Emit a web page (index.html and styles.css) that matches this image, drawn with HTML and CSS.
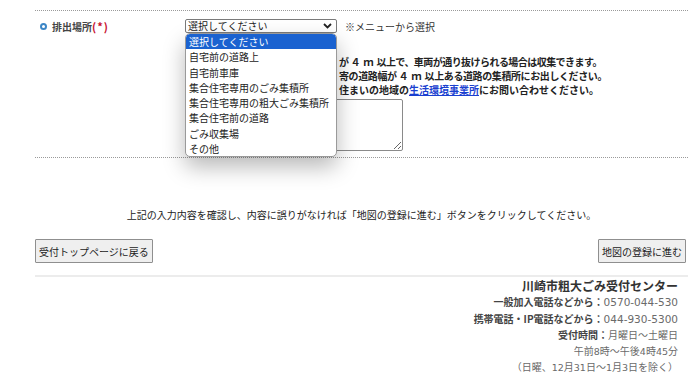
FILE: index.html
```html
<!DOCTYPE html>
<html lang="ja">
<head>
<meta charset="utf-8">
<title>排出場所</title>
<link rel="stylesheet" href="styles.css">
</head>
<body>
<div class="page">
  <div class="form-row">
    <div class="label-cell">
      <span class="ring"></span>
      <span class="label-text">排出場所</span><span class="req">(*)</span>
    </div>
    <div class="field-cell">
      <div class="select-line">
        <div class="select-wrap">
          <div class="select">
            <span>選択してください</span>
            <svg class="chev" width="9" height="6" viewBox="0 0 9 6"><path d="M1 1 L4.5 4.5 L8 1" fill="none" stroke="#222" stroke-width="1.8"/></svg>
          </div>
          <ul class="dropdown">
            <li class="active">選択してください</li>
            <li>自宅前の道路上</li>
            <li>自宅前車庫</li>
            <li>集合住宅専用のごみ集積所</li>
            <li>集合住宅専用の粗大ごみ集積所</li>
            <li>集合住宅前の道路</li>
            <li>ごみ収集場</li>
            <li>その他</li>
          </ul>
        </div>
        <span class="hint">※メニューから選択</span>
      </div>
      <p class="notes"><span class="tight1">が<span class="fw">４ｍ</span>以上で、車両が通り抜けられる場合は収集できます。</span><br><span class="tight">寄の道路幅が<span class="fw">４ｍ</span>以上ある道路の集積所にお出しください。</span><br>住まいの地域の<a href="#">生活環境事業所</a>にお問い合わせください。</p>
      <textarea class="memo"></textarea>
    </div>
  </div>

  <p class="confirm">上記の入力内容を確認し、内容に誤りがなければ「地図の登録に進む」ボタンをクリックしてください。</p>

  <div class="buttons">
    <button class="btn">受付トップページに戻る</button>
    <button class="btn">地図の登録に進む</button>
  </div>

  <div class="footer">
    <p class="center-name">川崎市粗大ごみ受付センター</p>
    <p><b>一般加入電話などから：</b><span class="val tel">0570-044-530</span></p>
    <p><b>携帯電話・IP電話などから：</b><span class="val tel">044-930-5300</span></p>
    <p><b>受付時間：</b><span class="val">月曜日～土曜日</span></p>
    <p><span class="val">午前<span class="num">8</span>時～午後<span class="num">4</span>時<span class="num">45</span>分</span></p>
    <p><span class="val">（日曜、<span class="num">12</span>月<span class="num">31</span>日～<span class="num">1</span>月<span class="num">3</span>日を除く）</span></p>
  </div>
</div>
</body>
</html>
```

FILE: styles.css
```css
* { box-sizing: border-box; }
html, body { margin: 0; padding: 0; background: #fff; }
body {
  font-family: "Noto Sans CJK JP", "Noto Sans", sans-serif;
  font-size: 10px;
  color: #333;
}
.page {
  margin: 0 12px 0 35px;
  padding-top: 10px;
}
.form-row {
  display: flex;
  border-top: 1px dotted #9a9a9a;
  border-bottom: 1px dotted #9a9a9a;
  padding: 8px 0 6px;
}
.label-cell {
  width: 150px;
  flex: none;
  display: flex;
  align-items: center;
  height: 14px;
  padding-left: 5px;
  font-weight: bold;
}
.ring {
  width: 7px;
  height: 7px;
  border: 2px solid #3d86c6;
  border-radius: 50%;
  margin-right: 5px;
}
.label-text { color: #444; }
.req { color: #c8102e; font-size: 11px; letter-spacing: 1px; }
.field-cell { flex: 1; }
.select-line {
  display: flex;
  align-items: center;
  height: 14px;
}
.select-wrap { position: relative; }
.select {
  width: 152px;
  height: 14px;
  border: 1px solid #7a7a7a;
  border-radius: 2px;
  display: flex;
  align-items: center;
  justify-content: space-between;
  padding: 0 4px 0 2px;
  line-height: 12px;
  background: #fff;
  color: #222;
}
.chev { display: block; }
.dropdown {
  position: absolute;
  left: 0;
  top: 14px;
  width: 152px;
  margin: 0;
  padding: 0;
  list-style: none;
  background: #fff;
  border: 1px solid #9a9a9a;
  border-radius: 5px;
  box-shadow: 0 10px 22px rgba(0,0,0,0.28);
  z-index: 5;
  overflow: hidden;
}
.dropdown li {
  height: 15.25px;
  line-height: 15px;
  padding-left: 3px;
  color: #222;
  white-space: nowrap;
}
.dropdown li.active {
  background: #1a62d0;
  color: #fff;
  border-radius: 4px 4px 0 0;
}
.hint { margin-left: 8px; color: #333; }
.notes {
  margin: 22px 0 0;
  padding-left: 154px;
  line-height: 14px;
  font-weight: bold;
  color: #222;
  white-space: nowrap;
  letter-spacing: 0;
}
.notes .fw { letter-spacing: 3px; padding-left: 2px; }
.notes .tight { letter-spacing: -0.4px; }
.notes .tight1 { letter-spacing: -0.55px; }
.notes a { color: #1a3fd0; text-decoration: underline; }
.memo {
  display: block;
  width: 218px;
  height: 52px;
  margin: 2px 0 0;
  border: 1px solid #8a8a8a;
  border-radius: 2px;
  resize: both;
  font: inherit;
}
.confirm {
  margin: 50px 0 0;
  text-align: center;
  line-height: 14px;
  color: #222;
}
.buttons {
  display: flex;
  justify-content: space-between;
  margin-top: 17px;
  padding-right: 2px;
  padding-bottom: 12px;
  border-bottom: 2px solid #ececec;
}
.btn {
  height: 24px;
  padding: 0 3px;
  font: inherit;
  color: #222;
  background: #efefef;
  border: 1px solid #8f8f8f;
  border-radius: 1px;
}
.footer {
  text-align: right;
  padding: 0 10px 0 0;
}
.footer p {
  margin: 0;
  line-height: 15.5px;
}
.footer .center-name {
  font-size: 12px;
  font-weight: bold;
  color: #333;
  line-height: 17px;
}
.footer b { color: #444; }
.footer .val { color: #6a6a6a; }
.footer .tel { font-family: "DejaVu Sans", "Noto Sans CJK JP", sans-serif; font-size: 10.5px; }
.footer .num { font-family: "DejaVu Sans", "Noto Sans CJK JP", sans-serif; font-size: 9.5px; }
```
